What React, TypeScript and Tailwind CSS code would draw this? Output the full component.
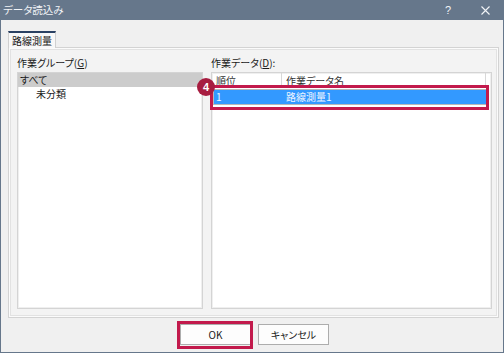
import React from "react";

const FONT = "font-['Noto_Sans_CJK_JP','Noto_Sans',sans-serif] [font-feature-settings:'palt']";

export default function App() {
  return (
    <div className={`w-[504px] h-[353px] flex flex-col bg-[#f0f0f0] border-x border-b border-[#66778b] text-[10px] leading-[14px] text-[#1a1a1a] ${FONT}`}>
      {/* title bar */}
      <div className="h-[20px] shrink-0 bg-[#66778b] flex items-center pl-[2px] text-[10.5px] text-[#f2f4f7]">
        <span>データ読込み</span>
        <div className="flex-1" />
        <span className="mr-[30px] text-[11px] font-['Liberation_Sans',sans-serif]">?</span>
        <svg width="9" height="9" viewBox="0 0 9 9" className="mr-[13px]">
          <path d="M0.5 0.5 L8.5 8.5 M8.5 0.5 L0.5 8.5" stroke="#f2f4f7" strokeWidth="1.1" />
        </svg>
      </div>

      {/* tab */}
      <div className="flex pl-[7px] pt-[11px]">
        <div className="relative z-10 -mb-px h-[17px] w-[48px] bg-[#f8f8f8] border-x border-[#d0d0d0] border-t-2 border-t-[#2a4163] flex items-center justify-center">
          路線測量
        </div>
      </div>

      {/* tab panel */}
      <div className="ml-[7px] w-[491px] h-[271px] border border-[#d3d3d3] bg-[#f3f3f3] shadow-[inset_0_0_0_1px_#fbfbfb,inset_0_0_0_2px_#e2e2e2] pt-[8px] pl-[8px] flex flex-col">
        <div className="flex gap-[8px]">
          {/* group list */}
          <div className="flex flex-col w-[186px]">
            <div className="h-[14px] mb-[2px]">
              作業グループ(<span className="underline">G</span>)
            </div>
            <div className="h-[237px] bg-white border border-[#d4d4d4] shadow-[inset_0_0_0_1px_#efefef]">
              <div className="h-[14px] bg-[#cccccc] pl-[2px] flex items-center">すべて</div>
              <div className="h-[14px] pl-[18px] flex items-center">未分類</div>
            </div>
          </div>

          {/* data list */}
          <div className="flex flex-col w-[281px]">
            <div className="h-[14px] mb-[2px]">
              作業データ(<span className="underline">D</span>):
            </div>
            <div className="relative h-[237px] bg-white border border-[#d4d4d4] shadow-[inset_0_0_0_1px_#efefef]">
              <div className="flex h-[15px] w-[274px] text-[#333]">
                <div className="w-[70px] pl-[4px] border-r border-[#d8d8d8] flex items-center">順位</div>
                <div className="flex-1 pl-[4px] border-r border-[#d8d8d8] flex items-center">作業データ名</div>
              </div>
              <div className="mt-[1px] ml-[1px] w-[274px] h-[16px] border border-[#b8b8b8] bg-[#3399ff] text-[#eef5ff] flex items-center">
                <div className="w-[69px] pl-[2px]">1</div>
                <div className="pl-[3px]">路線測量1</div>
              </div>

              {/* highlight */}
              <div className="absolute left-[-2px] top-[12px] w-[279px] h-[25px] border-[3px] border-[#c21a4c]" />
              <div className="absolute left-[-15px] top-[5px] w-[18px] h-[18px] rounded-full bg-[#a71d40] text-white text-[11px] font-bold flex items-center justify-center font-['Liberation_Sans',sans-serif]">
                4
              </div>
            </div>
          </div>
        </div>
      </div>

      {/* buttons */}
      <div className="flex justify-center gap-[7px] pl-[5px] mt-[6px]">
        <div className="relative">
          <button className="w-[71px] h-[21px] bg-[#fdfdfd] border border-[#adadad] flex items-center justify-center text-[10px]">
            OK
          </button>
          <div className="absolute -left-[3px] -top-[3px] -right-[2px] -bottom-[4px] border-[3px] border-[#c21a4c]" />
        </div>
        <button className="w-[71px] h-[21px] bg-[#fdfdfd] border border-[#adadad] flex items-center justify-center text-[10px]">
          キャンセル
        </button>
      </div>
    </div>
  );
}
